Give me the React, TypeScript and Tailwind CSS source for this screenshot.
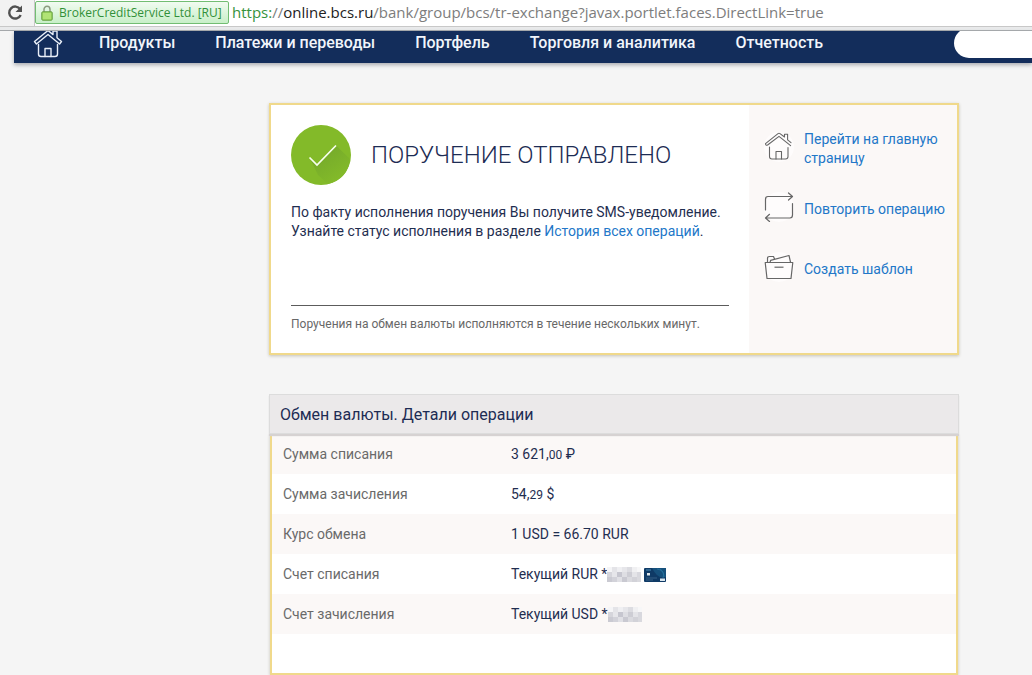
import React from "react";

const HOUSE_ROOF = "M1.5 13.5 L15 2.5 L20 6.6 V3 H24 V9.8 L28.5 13.5 L26.6 16 L15 6.5 L3.4 16 Z";

function HouseIcon({ className }: { className: string }) {
  return (
    <svg viewBox="0 0 30 30" className={className} fill="none" stroke="currentColor" strokeWidth="1.4" strokeLinejoin="round" strokeLinecap="round" aria-hidden="true">
      <path d={HOUSE_ROOF} />
      <path d="M5.5 16.5 V26 Q5.5 28.5 8 28.5 H22 Q24.5 28.5 24.5 26 V16.5" />
      <path d="M12 28.5 V20.5 H18 V28.5" />
    </svg>
  );
}

function ActionHouseIcon() {
  return (
    <svg viewBox="0 1 30 30" className="size-[30px]" fill="none" stroke="currentColor" strokeWidth="1.1" strokeLinejoin="round" strokeLinecap="round" aria-hidden="true">
      <path d="M1.5 12.6 L14 2.6 Q15 2 16 2.6 L20.5 6 V3.2 H23.6 V8.8 L27 11.6 M1.5 12.6 Q1.6 15 3.6 14 L15 5.4 L26.6 14.6" />
      <path d="M5.5 16 V25.5 Q5.5 28 8 28 H21.5 Q24 28 24 25.5 V16.5" />
      <path d="M12 28 V20.5 H17.5 V28" />
    </svg>
  );
}

function RepeatIcon() {
  return (
    <svg viewBox="0 0 30 30" className="size-[30px]" fill="none" stroke="currentColor" strokeWidth="1.2" strokeLinejoin="round" strokeLinecap="round" aria-hidden="true">
      <path d="M1.5 18 V7.5 Q1.5 4.5 4 4.5 H28 M24.5 1 L28.5 4.5 L24.5 8" />
      <path d="M28.5 11.5 V23 Q28.5 26 26 26 H2 M5.5 22.3 L1.5 26 L5.5 29.5" />
    </svg>
  );
}

function FolderIcon() {
  return (
    <svg viewBox="0 0 30 30" className="size-[30px]" fill="none" stroke="currentColor" strokeWidth="1.2" strokeLinejoin="round" aria-hidden="true">
      <path d="M1.2 10.5 H28.8 L27 26.5 H3 Z" />
      <path d="M3.5 10.5 V6.5 Q3.5 4.5 5.5 4.5 H9.5 L10.5 7 M6 10.5 L6.6 8.4 L25 3.5 L26.6 10.5" />
      <path d="M10.5 15.2 H19.5" />
    </svg>
  );
}

const MASK_SHADES = [
  ["#f5f5f7", "#e4e4e8", "#efeff2", "#e6e6ea", "#dcdce1", "#f0f0f2", "#f7f7f8"],
  ["#d5d5db", "#e6e6ea", "#c6c6cf", "#dedee3", "#cdcdd4", "#e4e4e8", "#d8d8de"],
  ["#cacad2", "#d2d2d9", "#e0e0e5", "#c9c9d1", "#dadadf", "#d2d2d8", "#d9d9de"],
];

function MaskedDigits() {
  return (
    <svg viewBox="0 0 34 15" className="h-[15px] w-[34px]" role="img" aria-label="Скрыто" shapeRendering="crispEdges">
      {MASK_SHADES.map((row, y) =>
        row.map((fill, x) => <rect key={`${x}-${y}`} x={x * 5} y={y * 5} width="5" height="5" fill={fill} />)
      )}
    </svg>
  );
}

function BankCard() {
  return (
    <svg viewBox="0 0 22 14" className="ml-[3px] mt-[2px] h-[14px] w-[22px]" aria-hidden="true">
      <rect width="22" height="14" rx="1" fill="#0f3a66" />
      <path d="M8 0 H22 V9 Q14 12 8 0" fill="#16507c" />
      <path d="M13 1 Q20 2 20 9 M16 1 Q21 4 19 10" fill="none" stroke="#2877a2" strokeWidth="0.7" />
      <rect x="2" y="1.5" width="5" height="1" fill="#4d8eb8" />
      <rect x="3" y="5" width="3" height="2.5" fill="#dce6ec" />
      <path d="M2 10 H13 M2 12 H9" stroke="#50799b" strokeWidth="0.6" />
      <rect x="16" y="10.5" width="5" height="2.5" fill="#d9e6ef" />
    </svg>
  );
}

const navItems = ["Продукты", "Платежи и переводы", "Портфель", "Торговля и аналитика", "Отчетность"];

const actions = [
  { label: "Перейти на главную страницу", icon: <ActionHouseIcon /> },
  { label: "Повторить операцию", icon: <RepeatIcon /> },
  { label: "Создать шаблон", icon: <FolderIcon /> },
];

const details: { label: string; value: React.ReactNode }[] = [
  { label: "Сумма списания", value: <span>3 621,<span className="text-[12px]">00</span> ₽</span> },
  { label: "Сумма зачисления", value: <span>54,<span className="text-[12px]">29</span> $</span> },
  { label: "Курс обмена", value: "1 USD = 66.70 RUR" },
  { label: "Счет списания", value: <><span>Текущий RUR *</span><MaskedDigits /><BankCard /></> },
  { label: "Счет зачисления", value: <><span>Текущий USD *</span><MaskedDigits /></> },
];

function AddressBar() {
  return (
    <header className="flex h-[31px] items-start border-b border-[#a5a8ab] bg-[#e9eaeb]">
      <div className="flex h-[27px] w-[34px] shrink-0 justify-center border-b border-[#c8c8c8] bg-[#f2f2f2] pt-1 pr-1">
        <button type="button" aria-label="Обновить" className="size-[18px] text-[#505050]">
          <svg viewBox="0 0 18 18" className="size-[18px]" aria-hidden="true">
            <path d="M14.2 5.2 A6 6 0 1 0 14.7 11" fill="none" stroke="currentColor" strokeWidth="2.4" />
            <path d="M16 1.5 V8 H9.5 Z" fill="currentColor" />
          </svg>
        </button>
      </div>
      <div className="flex h-[27px] min-w-0 flex-1 items-start border-b border-l border-[#c8c8c8] bg-white pt-px font-['Open_Sans',sans-serif]">
        <div className="flex h-[23px] w-[194px] shrink-0 items-center gap-[6px] rounded-[2px] border border-[#72bd72] bg-linear-to-b from-[#f1fbf1] to-[#c8efc8] pl-[5px]">
          <svg viewBox="0 0 12 16" className="h-[16px] w-[12px]" aria-hidden="true">
            <path d="M3 8 V4.5 A3 3.2 0 0 1 9 4.5 V8" fill="none" stroke="#8c9c80" strokeWidth="1.5" />
            <rect x="0.8" y="6.8" width="10.4" height="8.4" rx="1" fill="#a2dc61" stroke="#619b3e" />
            <path d="M2 9 H10 M2 11 H10 M2 13 H10" stroke="#c6ed94" strokeWidth="0.8" />
          </svg>
          <span className="whitespace-nowrap text-[12px] leading-[20px] text-[#319039]">BrokerCreditService Ltd. [RU]</span>
        </div>
        <div className="pl-[3px] text-[15px] leading-[22px] whitespace-nowrap text-[#7d7d7d]">
          <span className="text-[#35923c]">https:</span>//<span className="text-[#222222]">online.bcs.ru</span>/bank/group/bcs/tr-exchange?javax.portlet.faces.DirectLink=true
        </div>
      </div>
    </header>
  );
}

export default function App() {
  return (
    <div className="min-h-screen bg-[#f5f5f5] font-[Roboto,sans-serif] text-[14px] text-[#1f2e50]">
      <AddressBar />
      <nav className="ml-[14px] h-[32px] bg-[#132d5b] shadow-[0_2px_4px_#a9acb1]">
        <div className="flex h-full items-end overflow-hidden pl-[19px]">
          <a href="#home" aria-label="Главная" className="mb-[5px] shrink-0 text-[#e9eff8]">
            <HouseIcon className="size-[30px]" />
          </a>
          <div className="ml-9 flex gap-10 pb-[10px] text-[16px] leading-[20px] font-medium whitespace-nowrap text-[#f1f5fb]">
            {navItems.map((item) => <a key={item} href="#menu">{item}</a>)}
          </div>
          <input type="search" aria-label="Поиск" className="mb-[5px] ml-auto h-[30px] w-[78px] shrink-0 rounded-l-full bg-white px-4 outline-none" />
        </div>
      </nav>

      <main className="pt-[40px] pr-[73px] pl-[269px]">
        <section className="flex min-h-[252px] border-2 border-[#f0d98b] bg-white shadow-[0_1px_3px_#c5c2b8]">
          <div className="min-w-0 flex-1 px-5 pt-5">
            <div className="flex items-center gap-5">
              <svg viewBox="0 0 60 60" className="size-[60px] shrink-0" aria-hidden="true">
                <defs>
                  <linearGradient id="tick-shade" x1="0.2" y1="0.1" x2="0.75" y2="0.85">
                    <stop offset="0" stopColor="#73a82b" />
                    <stop offset="1" stopColor="#83ba29" />
                  </linearGradient>
                </defs>
                <circle cx="30" cy="30" r="30" fill="#83ba29" />
                <path d="M18.5 32.5 L26 40 L45 20.5 L59 34 Q57 54 37 59 L27 50 Z" fill="url(#tick-shade)" />
                <path d="M18.5 32.5 L26 40 L45 20.5" fill="none" stroke="#f8fff0" strokeWidth="1.7" />
              </svg>
              <h1 className="text-[24px] leading-[30px] font-light whitespace-nowrap text-[#1d2c54]">ПОРУЧЕНИЕ ОТПРАВЛЕНО</h1>
            </div>
            <p className="pt-[18px] leading-[19px] whitespace-nowrap">
              По факту исполнения поручения Вы получите SMS-уведомление.<br />
              Узнайте статус исполнения в разделе <a href="#history" className="text-[#2277c8]">История всех операций</a>.
            </p>
            <p className="mt-[64px] border-t border-[#5c5c5c] pt-2 text-[12px] leading-[20px] text-[#686868]">
              Поручения на обмен валюты исполняются в течение нескольких минут.
            </p>
          </div>
          <aside className="flex w-[208px] shrink-0 flex-col gap-5 bg-[#fbf8f7] pt-6 pl-[15px]">
            {actions.map(({ label, icon }) => (
              <a key={label} href="#action" className="flex h-[40px] items-center gap-[10px] leading-[19px] text-[#2277c8]">
                <span className="-mt-1 shrink-0 rounded-full bg-[#fefcfc] text-[#666666]">{icon}</span>
                <span>{label}</span>
              </a>
            ))}
          </aside>
        </section>

        <section className="mt-[39px]">
          <h2 className="relative h-[40px] border border-[#dcdcdc] bg-[#ebe9ea] pl-[10px] text-[16px] leading-[39px] text-[#1d2c54] shadow-[0_2px_1px_#d6d2d2]">
            Обмен валюты. Детали операции
          </h2>
          <div className="mx-px border-2 border-t-0 border-[#f0d98b] bg-white pb-[39px] shadow-[0_1px_3px_#c5c2b8]">
            <table className="w-full border-collapse">
              <tbody>
                {details.map(({ label, value }) => (
                  <tr key={label} className="h-[40px] odd:bg-[#fbf8f7]">
                    <th scope="row" className="w-[239px] p-0 pl-[11px] text-left font-normal text-[#6a6a6a]">{label}</th>
                    <td className="p-0"><div className="flex items-center leading-[20px] whitespace-nowrap">{value}</div></td>
                  </tr>
                ))}
              </tbody>
            </table>
          </div>
        </section>
      </main>
    </div>
  );
}
